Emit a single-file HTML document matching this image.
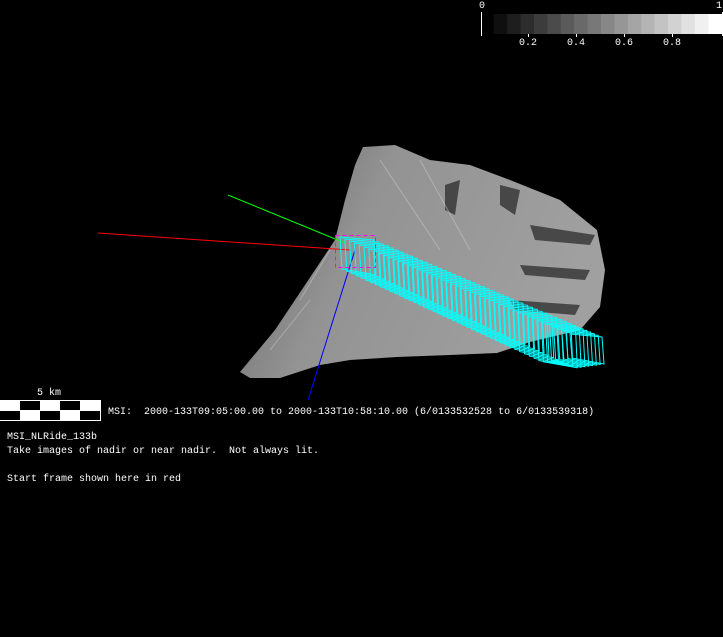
<!DOCTYPE html>
<html><head><style>
body{margin:0;background:#000;width:723px;height:637px;overflow:hidden;position:relative;font-family:"Liberation Mono","DejaVu Sans Mono",monospace;font-size:10px;color:#fff}
.t{position:absolute;white-space:pre;line-height:12px}
</style></head><body>
<svg width="723" height="637" style="position:absolute;left:0;top:0" id="s">
<defs>
<linearGradient id="g" x1="0" y1="0" x2="1" y2="0.3">
<stop offset="0" stop-color="#666"/><stop offset="0.4" stop-color="#939393"/><stop offset="1" stop-color="#a0a0a0"/></linearGradient>
</defs>
<polygon fill="url(#g)" points="240,372 275,330 305,285 335,240 345,200 355,165 363,147 395,145 430,160 470,165 510,180 560,200 597,230 605,270 600,307 580,330 530,342 497,353 450,355 397,357 350,360 320,365 280,378 250,378"/>
<g fill="#333" opacity="0.8">
<polygon points="445,185 460,180 455,215 445,210"/>
<polygon points="500,185 520,190 515,215 500,205"/>
<polygon points="520,265 590,270 585,280 525,275"/>
<polygon points="530,225 595,235 590,245 535,240"/>
<polygon points="510,300 580,305 575,315 515,310"/>
</g>
<g stroke="#ccc" stroke-width="1" opacity="0.5">
<line x1="300" y1="300" x2="330" y2="250"/><line x1="270" y1="350" x2="310" y2="300"/>
<line x1="380" y1="160" x2="440" y2="250"/><line x1="420" y1="160" x2="470" y2="250"/>
</g>
<line x1="228" y1="195" x2="345" y2="243" stroke="#0f0"/>
<line x1="98" y1="233" x2="350" y2="250" stroke="#f00"/>
<line x1="355" y1="250" x2="308" y2="400" stroke="#00f"/>
<g id="c" fill="none" stroke="#0ff" stroke-width="1"></g>
<rect x="335.5" y="235.5" width="40" height="32" fill="none" stroke="#f0f" stroke-dasharray="4,3"/>
<g id="cb"></g>
<line x1="481.5" y1="12" x2="481.5" y2="36" stroke="#fff"/>
<line x1="722.5" y1="12" x2="722.5" y2="36" stroke="#fff"/>
<g stroke="#fff"><line x1="528.5" y1="34" x2="528.5" y2="37"/><line x1="576.5" y1="34" x2="576.5" y2="37"/><line x1="624.5" y1="34" x2="624.5" y2="37"/><line x1="672.5" y1="34" x2="672.5" y2="37"/></g>
<rect x="0.5" y="400.5" width="100" height="20" fill="#fff" stroke="#fff"/>
<g fill="#000"><rect x="20" y="401" width="20" height="9"/><rect x="60" y="401" width="20" height="9"/><rect x="0" y="411" width="20" height="9"/><rect x="40" y="411" width="20" height="9"/><rect x="80" y="411" width="20" height="9"/></g>
</svg>
<div class="t" style="left:479px;top:1px">0</div>
<div class="t" style="left:716px;top:1px">1</div>
<div class="t" style="left:519px;top:38px">0.2</div>
<div class="t" style="left:567px;top:38px">0.4</div>
<div class="t" style="left:615px;top:38px">0.6</div>
<div class="t" style="left:663px;top:38px">0.8</div>
<div class="t" style="left:37px;top:388px">5 km</div>
<div class="t" style="left:108px;top:407px">MSI:  2000-133T09:05:00.00 to 2000-133T10:58:10.00 (6/0133532528 to 6/0133539318)</div>
<div class="t" style="left:7px;top:432px">MSI_NLRide_133b</div>
<div class="t" style="left:7px;top:446px">Take images of nadir or near nadir.  Not always lit.</div>
<div class="t" style="left:7px;top:474px">Start frame shown here in red</div>
<script>
var ns="http://www.w3.org/2000/svg",c=document.getElementById("c"),cb=document.getElementById("cb");
for(var i=0;i<17;i++){var r=document.createElementNS(ns,"rect");var w=228/17;r.setAttribute("x",494+i*w-0.3);r.setAttribute("y",14);r.setAttribute("width",w+0.6);r.setAttribute("height",20);var v=Math.round(15+i*240/16);r.setAttribute("fill","rgb("+v+","+v+","+v+")");cb.appendChild(r);}
var N=50;
for(var i=0;i<N;i++){var t=i/(N-1),x,y,w=34,h;
 if(t<=0.85){var s=t/0.85;x=340+s*200;y=237+s*85;h=32+s*8;}
 else{var u=(t-0.85)/0.15;x=540+u*30;y=322+u*12;h=40-u*16;w=34-u*2;}
 var p=document.createElementNS(ns,"polygon");
 p.setAttribute("points",[x,y,x+w,y+3,x+w+2,y+h+6,x+2,y+h].join(","));c.appendChild(p);}
</script>
</body></html>
